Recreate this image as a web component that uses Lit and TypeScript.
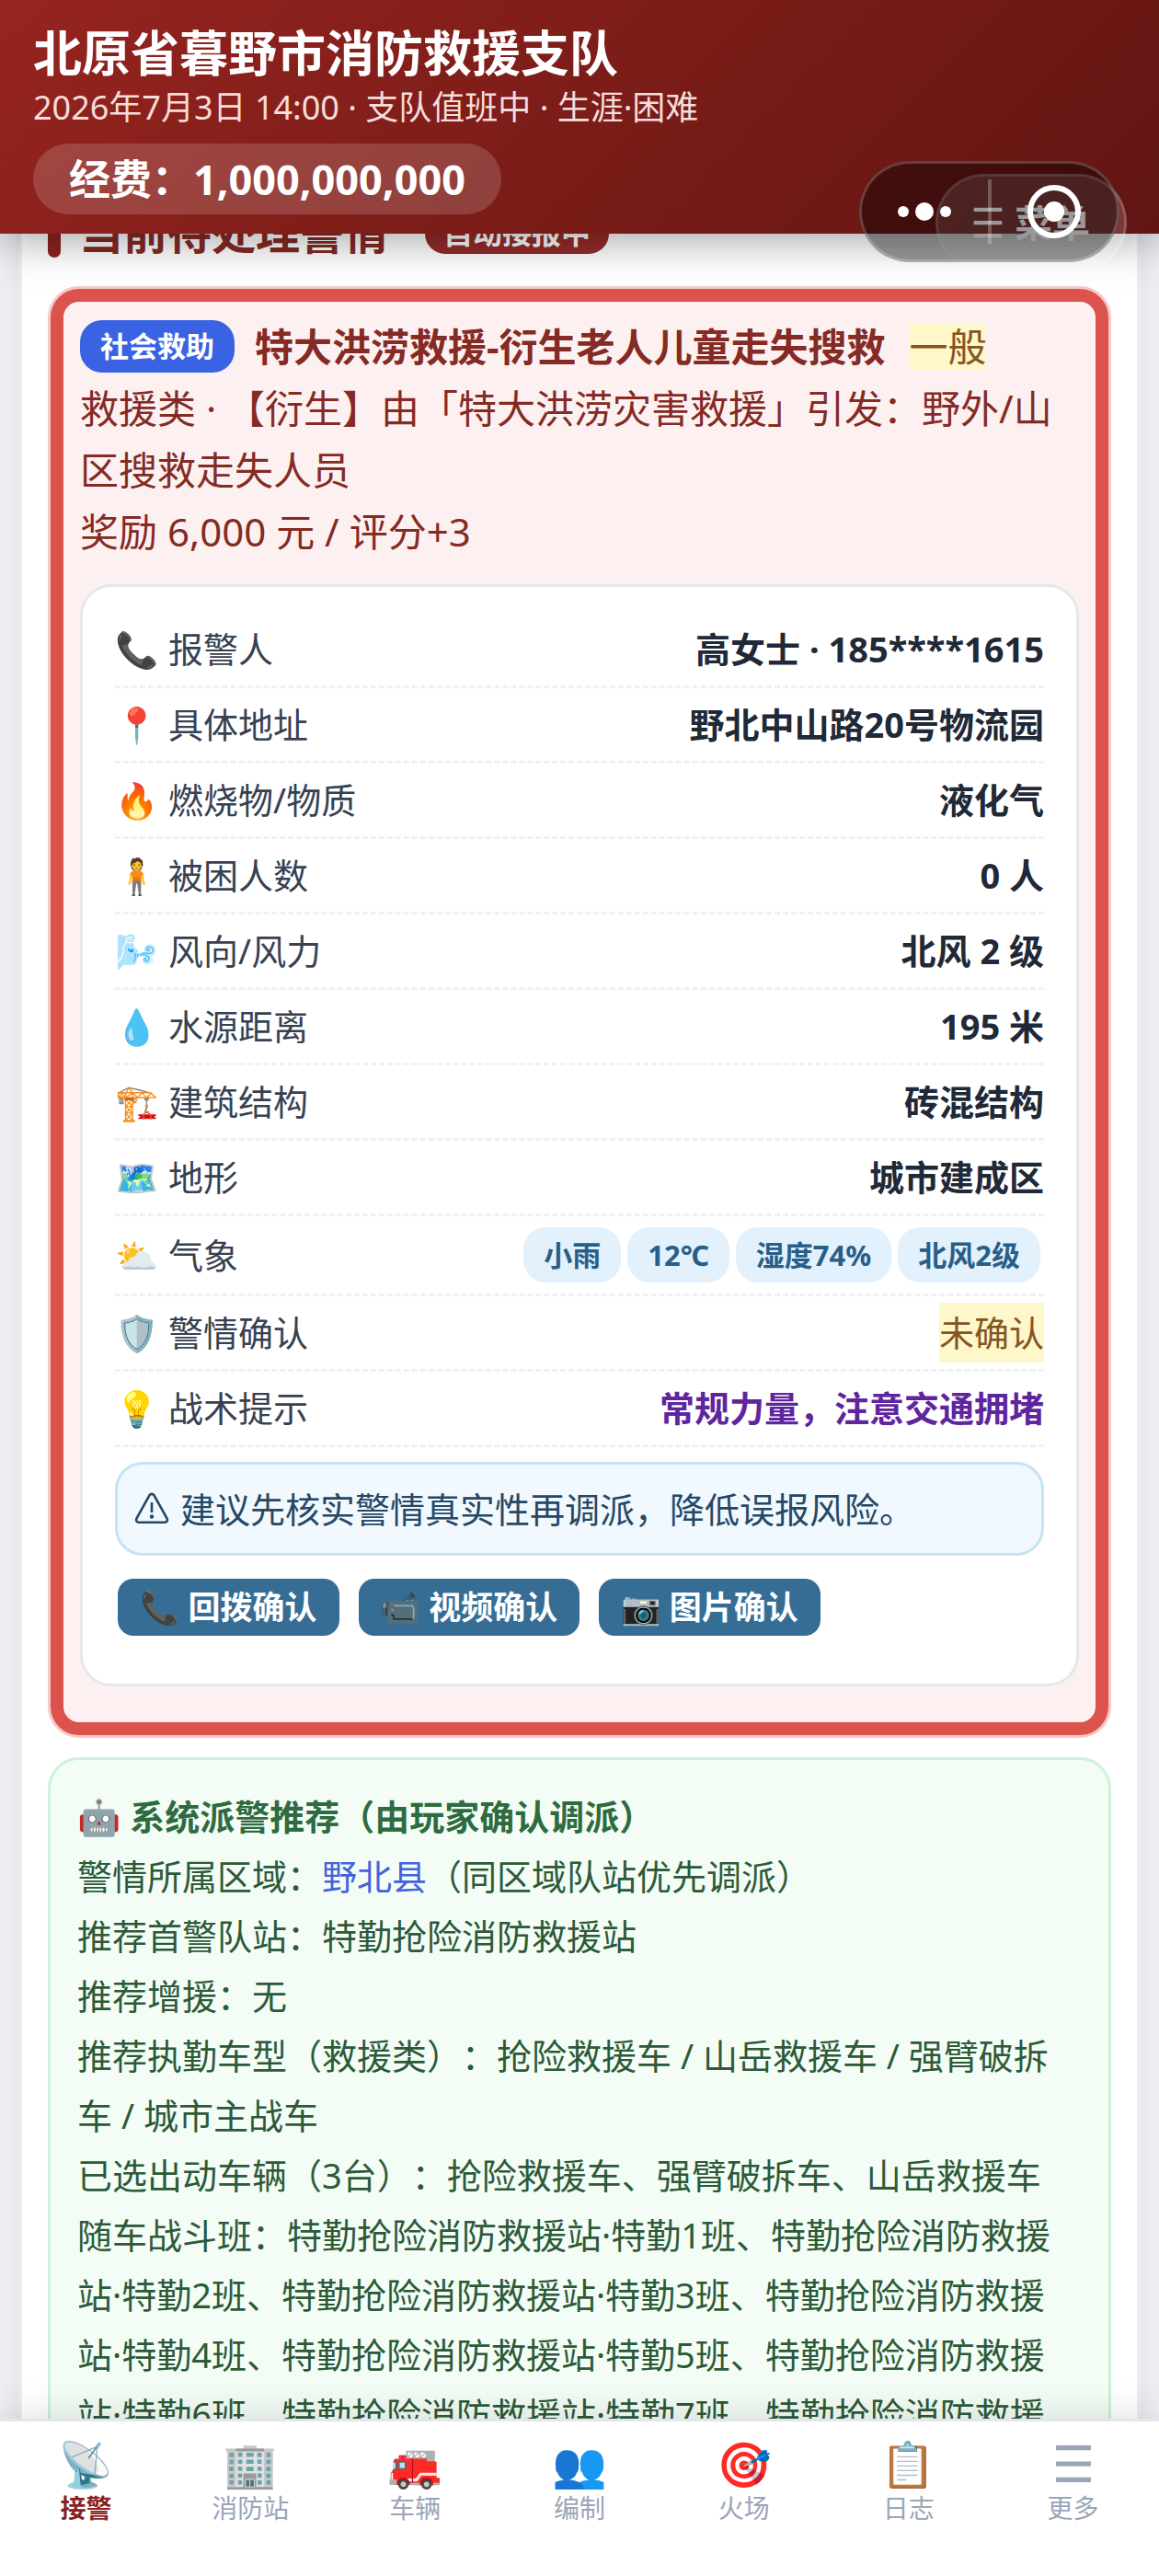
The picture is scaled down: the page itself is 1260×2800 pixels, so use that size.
import { LitElement, css, html, svg, nothing } from "lit";
import { customElement, property, state } from "lit/decorators.js";
import { classMap } from "lit/directives/class-map.js";

interface Fact {
  icon: string;
  label: string;
  value?: string;
  chips?: string[];
  kind?: "pending" | "tip";
}

const FACTS: Fact[] = [
  { icon: "📞", label: "报警人", value: "高女士 · 185****1615" },
  { icon: "📍", label: "具体地址", value: "野北中山路20号物流园" },
  { icon: "🔥", label: "燃烧物/物质", value: "液化气" },
  { icon: "🧍", label: "被困人数", value: "0 人" },
  { icon: "🌬️", label: "风向/风力", value: "北风 2 级" },
  { icon: "💧", label: "水源距离", value: "195 米" },
  { icon: "🏗️", label: "建筑结构", value: "砖混结构" },
  { icon: "🗺️", label: "地形", value: "城市建成区" },
  { icon: "⛅", label: "气象", chips: ["小雨", "12℃", "湿度74%", "北风2级"] },
  { icon: "🛡️", label: "警情确认", value: "未确认", kind: "pending" },
  { icon: "💡", label: "战术提示", value: "常规力量，注意交通拥堵", kind: "tip" },
];

const CHECKS = [
  { icon: "📞", label: "回拨确认" },
  { icon: "📹", label: "视频确认" },
  { icon: "📷", label: "图片确认" },
];

const TABS = [
  { icon: "📡", label: "接警" },
  { icon: "🏢", label: "消防站" },
  { icon: "🚒", label: "车辆" },
  { icon: "👥", label: "编制" },
  { icon: "🎯", label: "火场" },
  { icon: "📋", label: "日志" },
  { icon: "", label: "更多" },
];

const SQUADS = [1, 2, 3, 4, 5, 6, 7, 8]
  .map((n) => `特勤抢险消防救援站·特勤${n}班`)
  .join("、");

const bars = svg`<path d="M2 3.5h36M2 20h36M2 36.5h36" stroke="currentColor" stroke-width="5" fill="none"/>`;

@customElement("fire-header")
export class FireHeader extends LitElement {
  static styles = css`
    :host {
      display: block;
      position: relative;
      z-index: 2;
      padding: 26px 36px 21px;
      color: #fff;
      background: linear-gradient(135deg, #96241f, #611512);
      box-shadow: 0 8px 44px rgba(0, 0, 0, 0.35);
    }
    h1 {
      margin: 0;
      font-size: 53px;
      line-height: 64px;
    }
    .status {
      margin: 4px 0 16px;
      font-size: 36px;
      line-height: 46px;
      color: #f6dcdb;
    }
    .funds {
      display: inline-block;
      vertical-align: top;
      padding: 0 39px;
      border-radius: 39px;
      font-size: 45px;
      line-height: 77px;
      font-weight: 700;
      background: rgba(255, 255, 255, 0.16);
    }
    button {
      font: inherit;
      color: inherit;
      background: none;
      border: 0;
      padding: 0;
    }
    svg {
      display: block;
    }
    /* both float over the lower edge of the header */
    .menu {
      position: absolute;
      top: 189px;
      right: 35px;
      display: flex;
      align-items: center;
      gap: 12px;
      padding: 0 37px;
      border: 3px solid rgba(255, 255, 255, 0.3);
      border-radius: 53px;
      font-size: 41px;
      line-height: 100px;
      font-weight: 700;
      background: rgba(255, 255, 255, 0.15);
      background-clip: padding-box;
    }
    .capsule {
      position: absolute;
      top: 175px;
      right: 43px;
      display: flex;
      align-items: center;
      box-sizing: border-box;
      width: 283px;
      height: 110px;
      border: 3px solid rgba(255, 255, 255, 0.2);
      border-radius: 55px;
      background: rgba(0, 0, 0, 0.4);
    }
    .capsule button {
      flex: 1;
      display: flex;
      justify-content: center;
    }
    .divider {
      width: 4px;
      height: 70px;
      background: rgba(255, 255, 255, 0.25);
    }
  `;

  render() {
    return html`
      <h1>北原省暮野市消防救援支队</h1>
      <p class="status">2026年7月3日 14:00 · 支队值班中 · 生涯·困难</p>
      <div class="funds">经费：1,000,000,000</div>
      <button class="menu">
        <svg width="34" height="34" viewBox="0 0 40 40" aria-hidden="true">${bars}</svg>
        菜单
      </button>
      <div class="capsule">
        <button aria-label="更多操作">
          <svg width="60" height="22" viewBox="0 0 60 22" fill="#fff">
            <circle cx="7" cy="11" r="6" />
            <circle cx="30" cy="11" r="10" />
            <circle cx="53" cy="11" r="6" />
          </svg>
        </button>
        <span class="divider"></span>
        <button aria-label="关闭">
          <svg width="60" height="60" viewBox="0 0 60 60">
            <circle cx="30" cy="30" r="26" fill="none" stroke="#fff" stroke-width="6" />
            <circle cx="30" cy="30" r="11" fill="#fff" />
          </svg>
        </button>
      </div>
    `;
  }
}

@customElement("incident-card")
export class IncidentCard extends LitElement {
  static styles = css`
    :host {
      display: block;
      border: 3px solid #f6c9c7;
      border-radius: 34px;
    }
    .frame {
      padding: 15px 18px 39px;
      border: 14px solid #dc524c;
      border-radius: 31px;
      background: #fcf1f0;
      color: #852a24;
      font-size: 42px;
      line-height: 67px;
    }
    h3 {
      display: flex;
      align-items: center;
      margin: 0;
      font-size: 42px;
      line-height: 67px;
    }
    p {
      margin: 0;
    }
    .type {
      margin-right: 22px;
      padding: 0 22px;
      border-radius: 24px;
      color: #fff;
      background: #3963e3;
      font-size: 31px;
      line-height: 57px;
    }
    .level {
      margin-left: 26px;
      line-height: 50px;
    }
    .level,
    .pending {
      color: #85541f;
      background: #fdf7ca;
      font-weight: 400;
    }
    .details {
      margin-top: 24px;
      padding: 28px 35px 52px;
      border: 3px solid #e5e7ea;
      border-radius: 34px;
      background: #fff;
      font-size: 38px;
    }
    dl {
      margin: 0;
    }
    .row {
      display: flex;
      align-items: center;
      justify-content: space-between;
      min-height: 79px;
      border-bottom: 3px dashed #f0f1f4;
    }
    .row.tall {
      min-height: 84px;
    }
    dt {
      display: flex;
      gap: 10px;
      color: #374151;
    }
    .emoji {
      width: 48px;
    }
    dd {
      margin: 0;
      color: #1f2937;
      font-weight: 700;
      line-height: 65px;
    }
    dd.tip {
      color: #5f259f;
    }
    dd.pending {
      color: #85541f;
      font-weight: 400;
    }
    .chips {
      display: flex;
      gap: 7px;
      margin-right: 4px;
    }
    .chip {
      padding: 0 22px;
      border-radius: 24px;
      color: #285f89;
      background: #e3f1fc;
      font-size: 31px;
      line-height: 60px;
    }
    .advice {
      display: flex;
      align-items: center;
      gap: 12px;
      margin-top: 16px;
      padding: 14px 18px;
      border: 3px solid #c4e4f6;
      border-radius: 30px;
      color: #244866;
      background: #f1f8fe;
      line-height: 68px;
    }
    .checks {
      display: flex;
      gap: 21px;
      margin: 25px 3px 0;
    }
    button {
      display: flex;
      gap: 9px;
      padding: 0 24px;
      border: 0;
      border-radius: 17px;
      color: #fff;
      background: #366d95;
      font: inherit;
      font-size: 35px;
      line-height: 62px;
      font-weight: 700;
    }
  `;

  renderFact(fact: Fact) {
    return html`
      <div class="row ${classMap({ tall: !!fact.chips })}">
        <dt><span class="emoji">${fact.icon}</span>${fact.label}</dt>
        <dd class=${fact.kind ?? nothing}>
          ${fact.chips
            ? html`<div class="chips">${fact.chips.map((c) => html`<span class="chip">${c}</span>`)}</div>`
            : fact.value}
        </dd>
      </div>
    `;
  }

  render() {
    return html`
      <div class="frame">
        <h3>
          <span class="type">社会救助</span>特大洪涝救援-衍生老人儿童走失搜救<span class="level">一般</span>
        </h3>
        <p>救援类 · 【衍生】由「特大洪涝灾害救援」引发：野外/山区搜救走失人员</p>
        <p>奖励 6,000 元 / 评分+3</p>
        <div class="details">
          <dl>${FACTS.map((fact) => this.renderFact(fact))}</dl>
          <div class="advice">
            <svg width="38" height="38" viewBox="0 0 38 38" fill="none" stroke="currentColor" aria-hidden="true">
              <path
                d="M16.6 4.2a2.8 2.8 0 0 1 4.8 0L35.6 29.6a2.8 2.8 0 0 1-2.4 4.2H4.8a2.8 2.8 0 0 1-2.4-4.2z"
                stroke-width="2.6"
              />
              <path d="M19 12v11" stroke-width="2.6" />
              <circle cx="19" cy="27.5" r="2.2" fill="currentColor" stroke="none" />
            </svg>
            建议先核实警情真实性再调派，降低误报风险。
          </div>
          <div class="checks">
            ${CHECKS.map((c) => html`<button><span>${c.icon}</span>${c.label}</button>`)}
          </div>
        </div>
      </div>
    `;
  }
}

@customElement("dispatch-card")
export class DispatchCard extends LitElement {
  static styles = css`
    :host {
      display: block;
      padding: 29px 36px 30px 29px;
      border: 3px solid #cdf2d9;
      border-radius: 34px;
      color: #2c5a38;
      background: #f3fdf6;
      font-size: 38px;
      line-height: 65px;
    }
    h3 {
      display: flex;
      gap: 10px;
      margin: 0;
      color: #2f6b40;
      font-size: 38px;
    }
    p {
      margin: 0;
    }
    a {
      color: #4263dc;
      text-decoration: none;
    }
  `;

  render() {
    return html`
      <h3><span>🤖</span>系统派警推荐（由玩家确认调派）</h3>
      <p>警情所属区域：<a href="#county">野北县</a>（同区域队站优先调派）</p>
      <p>推荐首警队站：特勤抢险消防救援站</p>
      <p>推荐增援：无</p>
      <p>推荐执勤车型（救援类）：抢险救援车 / 山岳救援车 / 强臂破拆车 / 城市主战车</p>
      <p>已选出动车辆（3台）：抢险救援车、强臂破拆车、山岳救援车</p>
      <p>随车战斗班：${SQUADS}</p>
    `;
  }
}

@customElement("tab-bar")
export class TabBar extends LitElement {
  static styles = css`
    :host {
      display: block;
      position: relative;
      z-index: 2;
      border-top: 3px solid #e5e6ec;
      background: #fff;
      box-shadow: 0 -4px 40px rgba(0, 0, 0, 0.12);
    }
    nav {
      display: flex;
      padding: 12px 4px 60px;
    }
    button {
      flex: 1;
      display: flex;
      flex-direction: column;
      align-items: center;
      padding: 0;
      border: 0;
      background: none;
      font: inherit;
      color: #9aa5b8;
      font-size: 28px;
      line-height: 28px;
    }
    .active {
      color: #8b1f1f;
      font-weight: 700;
    }
    .icon {
      display: flex;
      align-items: center;
      height: 68px;
      font-size: 48px;
      font-weight: 400;
    }
  `;

  @property()
  current = "接警";

  render() {
    return html`
      <nav>
        ${TABS.map(
          (tab) => html`
            <button
              class=${classMap({ active: tab.label === this.current })}
              @click=${() => this.dispatchEvent(new CustomEvent("select", { detail: tab.label }))}
            >
              <span class="icon">
                ${tab.icon || html`<svg width="42" height="42" viewBox="0 0 40 40" aria-hidden="true">${bars}</svg>`}
              </span>
              ${tab.label}
            </button>
          `
        )}
      </nav>
    `;
  }
}

@customElement("app-root")
export class AppRoot extends LitElement {
  static styles = css`
    :host {
      display: grid;
      grid-template-rows: auto minmax(0, 1fr) auto;
      height: 100vh;
      background: #eeeff4;
      font-family: "Noto Sans", "Noto Sans CJK SC", "Noto Color Emoji", sans-serif;
      text-spacing-trim: space-all;
    }
    main {
      overflow: hidden;
      padding: 0 21px;
    }
    /* the list is scrolled a little, its heading half under the header */
    .list {
      display: flex;
      flex-direction: column;
      gap: 21px;
      margin-top: -28px;
      padding: 0 28px;
      border: 3px solid #eceef2;
      border-top: 0;
      background: #fff;
      box-shadow: 0 0 30px rgba(0, 0, 0, 0.06);
    }
    h2 {
      display: flex;
      align-items: center;
      margin: 0 0 10px;
      color: #852a24;
      font-size: 48px;
      line-height: 54px;
    }
    h2::before {
      content: "";
      width: 14px;
      height: 54px;
      margin-right: 20px;
      border-radius: 7px;
      background: #8f231f;
    }
    .auto {
      margin-left: 40px;
      padding: 0 20px;
      border-radius: 22px;
      color: #fff;
      background: #952b2a;
      font-size: 32px;
      line-height: 46px;
    }
  `;

  @state()
  private tab = "接警";

  render() {
    return html`
      <fire-header></fire-header>
      <main>
        <div class="list">
          <h2>当前待处理警情<span class="auto">自动接报中</span></h2>
          <incident-card></incident-card>
          <dispatch-card></dispatch-card>
        </div>
      </main>
      <tab-bar .current=${this.tab} @select=${(e: CustomEvent) => (this.tab = e.detail)}></tab-bar>
    `;
  }
}
